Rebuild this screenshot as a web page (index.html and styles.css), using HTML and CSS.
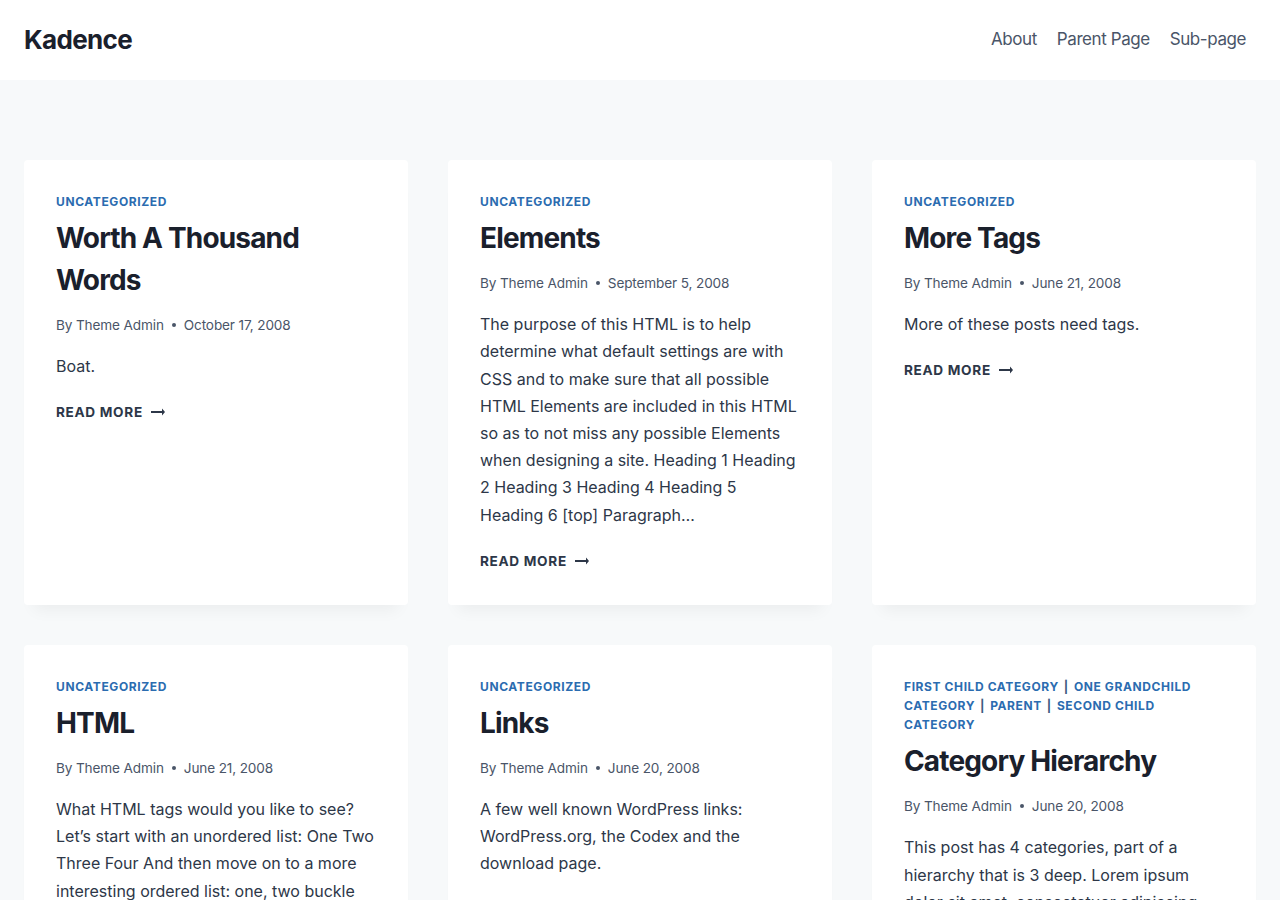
FILE: index.html
```html
<!DOCTYPE html>
<html lang="en">
<head>
  <meta charset="UTF-8">
  <meta name="viewport" content="width=device-width, initial-scale=1.0">
  <link rel="stylesheet" href="styles.css">
  <title>Kadence</title>
</head>
<body>

<header class="site-header">
  <a class="site-title" href="#">Kadence</a>
  <nav class="main-nav">
    <a href="#">About</a>
    <a href="#">Parent Page</a>
    <a href="#">Sub-page</a>
  </nav>
</header>

<main class="site-main">
  <div class="post-grid">

    <article class="post-card">
      <div class="post-cats"><a href="#">Uncategorized</a></div>
      <h2 class="post-title">Worth A Thousand Words</h2>
      <div class="post-meta">By Theme Admin <span class="dot"></span> October 17, 2008</div>
      <p class="post-excerpt">Boat.</p>
      <a class="read-more" href="#">Read More
        <svg width="14" height="8" viewBox="0 0 14 8"><path d="M0 3.1h11V0.5L14 4l-3 3.5V4.9H0z" fill="currentColor"/></svg>
      </a>
    </article>

    <article class="post-card">
      <div class="post-cats"><a href="#">Uncategorized</a></div>
      <h2 class="post-title">Elements</h2>
      <div class="post-meta">By Theme Admin <span class="dot"></span> September 5, 2008</div>
      <p class="post-excerpt">The purpose of this HTML is to help determine what default settings are with CSS and to make sure that all possible HTML Elements are included in this HTML so as to not miss any possible Elements when designing a site. Heading 1 Heading 2 Heading 3 Heading 4 Heading 5 Heading 6 [top] Paragraph…</p>
      <a class="read-more" href="#">Read More
        <svg width="14" height="8" viewBox="0 0 14 8"><path d="M0 3.1h11V0.5L14 4l-3 3.5V4.9H0z" fill="currentColor"/></svg>
      </a>
    </article>

    <article class="post-card">
      <div class="post-cats"><a href="#">Uncategorized</a></div>
      <h2 class="post-title">More Tags</h2>
      <div class="post-meta">By Theme Admin <span class="dot"></span> June 21, 2008</div>
      <p class="post-excerpt">More of these posts need tags.</p>
      <a class="read-more" href="#">Read More
        <svg width="14" height="8" viewBox="0 0 14 8"><path d="M0 3.1h11V0.5L14 4l-3 3.5V4.9H0z" fill="currentColor"/></svg>
      </a>
    </article>

    <article class="post-card">
      <div class="post-cats"><a href="#">Uncategorized</a></div>
      <h2 class="post-title">HTML</h2>
      <div class="post-meta">By Theme Admin <span class="dot"></span> June 21, 2008</div>
      <p class="post-excerpt">What HTML tags would you like to see? Let’s start with an unordered list: One Two Three Four And then move on to a more interesting ordered list: one, two buckle my shoe three, four, shut the door five, six, pick up sticks…</p>
      <a class="read-more" href="#">Read More
        <svg width="14" height="8" viewBox="0 0 14 8"><path d="M0 3.1h11V0.5L14 4l-3 3.5V4.9H0z" fill="currentColor"/></svg>
      </a>
    </article>

    <article class="post-card">
      <div class="post-cats"><a href="#">Uncategorized</a></div>
      <h2 class="post-title">Links</h2>
      <div class="post-meta">By Theme Admin <span class="dot"></span> June 20, 2008</div>
      <p class="post-excerpt">A few well known WordPress links: WordPress.org, the Codex and the download page.</p>
      <a class="read-more" href="#">Read More
        <svg width="14" height="8" viewBox="0 0 14 8"><path d="M0 3.1h11V0.5L14 4l-3 3.5V4.9H0z" fill="currentColor"/></svg>
      </a>
    </article>

    <article class="post-card">
      <div class="post-cats">
        <a href="#">First Child Category</a><span class="sep">|</span><a href="#">One Grandchild Category</a><span class="sep">|</span><a href="#">Parent</a><span class="sep">|</span><a href="#">Second Child Category</a>
      </div>
      <h2 class="post-title">Category Hierarchy</h2>
      <div class="post-meta">By Theme Admin <span class="dot"></span> June 20, 2008</div>
      <p class="post-excerpt">This post has 4 categories, part of a hierarchy that is 3 deep. Lorem ipsum dolor sit amet, consectetuer adipiscing elit. Aliquam sem. Sed massa velit, blandit id, dictum a…</p>
      <a class="read-more" href="#">Read More
        <svg width="14" height="8" viewBox="0 0 14 8"><path d="M0 3.1h11V0.5L14 4l-3 3.5V4.9H0z" fill="currentColor"/></svg>
      </a>
    </article>

  </div>
</main>

</body>
</html>
```

FILE: styles.css
```css
body {
  margin: 0;
  font-family: 'Inter', 'Noto Sans', sans-serif;
  font-size: 16px;
  line-height: 27.2px;
  color: #2d3748;
  background-color: #f7f9fa;
}

a {
  text-decoration: none;
  color: inherit;
}

.site-header {
  display: flex;
  align-items: center;
  justify-content: space-between;
  height: 80px;
  padding: 0 24px;
  background-color: #fff;
}

.site-title {
  font-size: 26px;
  font-weight: 700;
  letter-spacing: -0.025em;
  color: #1a202c;
}

.main-nav {
  display: flex;
}

.main-nav a {
  padding: 0 10px;
  font-size: 17px;
  letter-spacing: -0.025em;
  color: #4a5568;
}

.site-main {
  padding: 80px 24px;
}

.post-grid {
  display: grid;
  grid-template-columns: repeat(3, 1fr);
  gap: 40px;
}

.post-card {
  display: flex;
  flex-direction: column;
  align-items: flex-start;
  padding: 32px;
  background-color: #fff;
  border-radius: 4px;
  box-shadow: 0 15px 15px -10px rgba(0, 0, 0, 0.05);
}

.post-cats {
  font-size: 12px;
  line-height: 19.2px;
  font-weight: 700;
  letter-spacing: 0.05em;
  text-transform: uppercase;
  color: #2b6cb0;
}

/* pipe between category links, spaced by padding instead of text spaces */
.post-cats .sep {
  padding: 0 5px;
  color: #3d5a80;
}

.post-title {
  margin: 6px 0 0;
  font-size: 28px;
  line-height: 42px;
  font-weight: 700;
  letter-spacing: -0.03em;
  color: #1a202c;
}

.post-meta {
  display: flex;
  align-items: center;
  gap: 8px;
  margin-top: 12px;
  font-size: 13.6px;
  line-height: 24px;
  letter-spacing: -0.01em;
  color: #4a5568;
}

.dot {
  width: 4px;
  height: 4px;
  border-radius: 50%;
  background-color: #4a5568;
}

.post-excerpt {
  margin: 16px 0 0;
}

.read-more {
  display: flex;
  align-items: center;
  gap: 8px;
  margin-top: 20px;
  font-size: 13.6px;
  line-height: 24px;
  font-weight: 700;
  letter-spacing: 0.05em;
  text-transform: uppercase;
  color: #2d3748;
}
```
